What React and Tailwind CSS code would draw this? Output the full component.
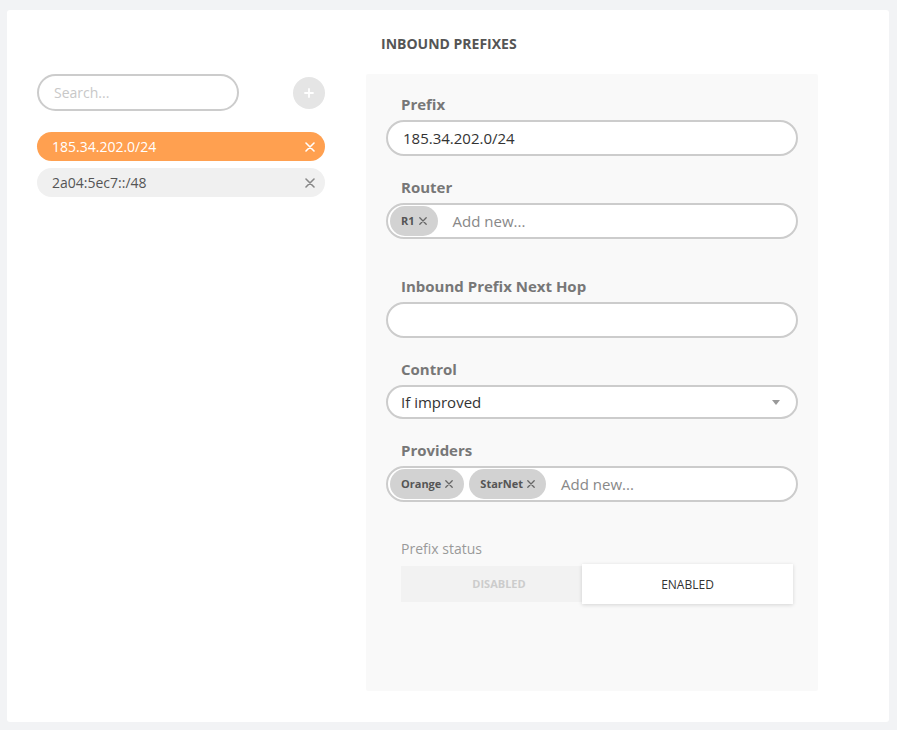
import React from 'react';

const PREFIXES = [
  { value: '185.34.202.0/24', active: true },
  { value: '2a04:5ec7::/48', active: false },
];

const Cross = ({ size = 10, className = '' }) => (
  <svg width={size} height={size} viewBox="0 0 10 10" className={className}>
    <path d="M1 1 L9 9 M9 1 L1 9" stroke="currentColor" strokeWidth="1.6" strokeLinecap="round" />
  </svg>
);

const Tag = ({ label }) => (
  <span className="flex items-center gap-[4px] h-[30px] px-[11px] rounded-full bg-[#d2d2d2] text-[11px] font-bold text-[#555]">
    {label}
    <Cross size={8} className="text-[#666]" />
  </span>
);

const Label = ({ children }) => (
  <div className="pl-[15px] mb-[6px] text-[15px] leading-[20px] font-bold text-[#777]">{children}</div>
);

const TagInput = ({ tags }) => (
  <div className="flex items-center gap-[5px] h-[36px] px-[2px] rounded-full border-2 border-[#ccc] bg-white">
    {tags.map((t) => (
      <Tag key={t} label={t} />
    ))}
    <span className="ml-[10px] text-[15px] text-[#888]">Add new...</span>
  </div>
);

export default function App() {
  return (
    <div
      className="w-[897px] h-[730px] bg-[#f2f3f5] pt-[10px] pl-[7px]"
      style={{ fontFamily: '"Open Sans", "Noto Sans", sans-serif' }}
    >
      <div className="w-[882px] h-[712px] bg-white rounded-[3px] flex">
        {/* left list */}
        <div className="w-[318px] pl-[30px] pt-[64px] shrink-0">
          <div className="flex items-center justify-between">
            <div className="w-[202px] h-[37px] rounded-full border-2 border-[#ccc] flex items-center pl-[15px] text-[14px] text-[#c8c8c8]">
              Search...
            </div>
            <div className="w-[32px] h-[32px] rounded-full bg-[#e5e5e5] flex items-center justify-center">
              <svg width="10" height="10" viewBox="0 0 10 10">
                <path d="M5 1 V9 M1 5 H9" stroke="white" strokeWidth="1.8" strokeLinecap="round" />
              </svg>
            </div>
          </div>
          <div className="mt-[21px] flex flex-col gap-[7px]">
            {PREFIXES.map((p) => (
              <div
                key={p.value}
                className={`h-[29px] rounded-full flex items-center justify-between pl-[15px] pr-[10px] text-[14px] ${
                  p.active ? 'bg-[#ffa050] text-white' : 'bg-[#f0f0f0] text-[#555]'
                }`}
              >
                <span>{p.value}</span>
                <Cross size={10} className={p.active ? 'text-white' : 'text-[#888]'} />
              </div>
            ))}
          </div>
        </div>

        {/* right form */}
        <div className="ml-[41px] pt-[24px]">
          <h2 className="pl-[15px] text-[14px] leading-[20px] font-bold text-[#555] uppercase">
            Inbound Prefixes
          </h2>
          <div className="mt-[20px] w-[452px] h-[617px] bg-[#f9f9f9] rounded-[2px] px-[20px] pt-[20px]">
            <Label>Prefix</Label>
            <div className="h-[36px] rounded-full border-2 border-[#ccc] bg-white flex items-center pl-[15px] text-[15px] text-[#333]">
              185.34.202.0/24
            </div>

            <div className="mt-[21px]">
              <Label>Router</Label>
              <TagInput tags={['R1']} />
            </div>

            <div className="mt-[37px]">
              <Label>Inbound Prefix Next Hop</Label>
              <div className="h-[36px] rounded-full border-2 border-[#ccc] bg-white" />
            </div>

            <div className="mt-[21px]">
              <Label>Control</Label>
              <div className="h-[34px] rounded-full border-2 border-[#ccc] bg-white flex items-center justify-between pl-[13px] pr-[16px] text-[15px] text-[#333]">
                <span>If improved</span>
                <svg width="8" height="5" viewBox="0 0 8 5">
                  <path d="M0 0 H8 L4 5 Z" fill="#999" />
                </svg>
              </div>
            </div>

            <div className="mt-[21px]">
              <Label>Providers</Label>
              <TagInput tags={['Orange', 'StarNet']} />
            </div>

            <div className="mt-[37px] pl-[15px]">
              <div className="text-[14px] leading-[20px] text-[#999]">Prefix status</div>
              <div className="mt-[5px] flex items-center w-[392px]">
                <div className="w-[196px] h-[36px] bg-[#f2f2f2] flex items-center justify-center text-[11px] font-bold text-[#ccc]">
                  DISABLED
                </div>
                <div className="relative -ml-[15px] w-[211px] h-[40px] bg-white shadow-[0_1px_4px_rgba(0,0,0,0.15)] flex items-center justify-center pt-[2px] text-[12px] text-[#333]">
                  ENABLED
                </div>
              </div>
            </div>
          </div>
        </div>
      </div>
    </div>
  );
}
